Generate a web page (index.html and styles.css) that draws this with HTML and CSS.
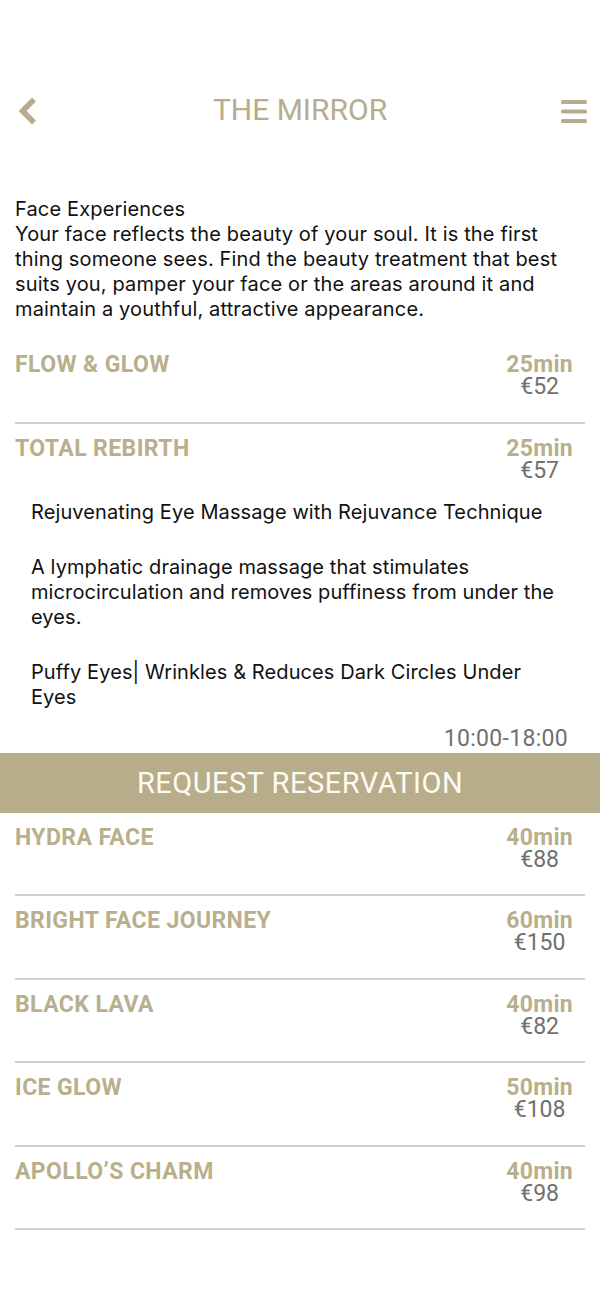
FILE: index.html
```html
<!DOCTYPE html>
<html lang="en">
<head>
<meta charset="utf-8">
<title>The Mirror</title>
<link rel="stylesheet" href="styles.css">
</head>
<body>
<header class="nav">
  <div class="nav-left">
    <svg class="back" width="22" height="28" viewBox="0 0 22 28"><path d="M17 2.5 L5.5 14 L17 25.5" fill="none" stroke="#b5ad8b" stroke-width="5.5" stroke-linecap="butt" stroke-linejoin="miter"/></svg>
  </div>
  <h1 class="title">THE MIRROR</h1>
  <div class="nav-right">
    <svg class="menu" width="26" height="23" viewBox="0 0 26 23"><rect x="0" y="0" width="26" height="4" rx="1.5" fill="#b5ad8b"/><rect x="0" y="9.5" width="26" height="4" rx="1.5" fill="#b5ad8b"/><rect x="0" y="19" width="26" height="4" rx="1.5" fill="#b5ad8b"/></svg>
  </div>
</header>

<main class="content">
  <p class="intro">Face Experiences<br>Your face reflects the beauty of your soul. It is the first thing someone sees. Find the beauty treatment that best suits you, pamper your face or the areas around it and maintain a youthful, attractive appearance.</p>

  <ul class="list">
    <li class="item">
      <div class="row">
        <span class="name">FLOW &amp; GLOW</span>
        <span class="meta"><span class="dur">25min</span><span class="price">€52</span></span>
      </div>
    </li>
    <li class="item open">
      <div class="row">
        <span class="name">TOTAL REBIRTH</span>
        <span class="meta"><span class="dur">25min</span><span class="price">€57</span></span>
      </div>
      <div class="details">
        <div class="desc">
          <p>Rejuvenating Eye Massage with Rejuvance Technique</p>
          <p>A lymphatic drainage massage that stimulates microcirculation and removes puffiness from under the eyes.</p>
          <p>Puffy Eyes| Wrinkles &amp; Reduces Dark Circles Under Eyes</p>
        </div>
        <div class="hours">10:00-18:00</div>
        <button class="reserve">REQUEST RESERVATION</button>
      </div>
    </li>
    <li class="item">
      <div class="row">
        <span class="name">HYDRA FACE</span>
        <span class="meta"><span class="dur">40min</span><span class="price">€88</span></span>
      </div>
    </li>
    <li class="item">
      <div class="row">
        <span class="name">BRIGHT FACE JOURNEY</span>
        <span class="meta"><span class="dur">60min</span><span class="price">€150</span></span>
      </div>
    </li>
    <li class="item">
      <div class="row">
        <span class="name">BLACK LAVA</span>
        <span class="meta"><span class="dur">40min</span><span class="price">€82</span></span>
      </div>
    </li>
    <li class="item">
      <div class="row">
        <span class="name">ICE GLOW</span>
        <span class="meta"><span class="dur">50min</span><span class="price">€108</span></span>
      </div>
    </li>
    <li class="item">
      <div class="row">
        <span class="name">APOLLO’S CHARM</span>
        <span class="meta"><span class="dur">40min</span><span class="price">€98</span></span>
      </div>
    </li>
  </ul>
</main>
</body>
</html>
```

FILE: styles.css
```css
* { box-sizing: border-box; }

html, body {
  margin: 0;
  padding: 0;
  background: #ffffff;
}

body {
  width: 600px;
  font-family: Roboto, "Liberation Sans", sans-serif;
  color: #111111;
}

.nav {
  display: grid;
  grid-template-columns: 80px 1fr 80px;
  align-items: center;
  height: 44px;
  margin-top: 88px;
}

.nav-left {
  padding-left: 17px;
  display: flex;
  align-items: center;
}

.nav-right {
  padding-right: 13px;
  display: flex;
  justify-content: flex-end;
  align-items: center;
}

.back { display: block; margin-top: 2px; }
.menu { display: block; margin-top: 2px; }

.title {
  margin: 0;
  text-align: center;
  font-family: Roboto, sans-serif;
  font-weight: 400;
  font-size: 30px;
  line-height: 44px;
  color: #b5ad8b;
}

.content {
  padding: 0 15px;
}

.intro {
  margin: 65px 0 0;
  font-family: Inter, "Noto Sans", sans-serif;
  font-size: 20px;
  line-height: 25px;
  letter-spacing: 0.15px;
  color: #111111;
}

.list {
  list-style: none;
  margin: 32px 0 0;
  padding: 0;
}

.item {
  border-bottom: 2px solid #cfcfcf;
}

.row {
  display: flex;
  justify-content: space-between;
  align-items: flex-start;
  padding: 14px 0 23.5px;
}

.item:first-child .row { padding-top: 0; }

.name {
  font-family: Roboto, sans-serif;
  font-weight: 700;
  font-size: 23px;
  line-height: 22px;
  letter-spacing: 0.4px;
  color: #b8af8d;
}

.meta {
  display: flex;
  flex-direction: column;
  align-items: center;
  padding-right: 12px;
}

.dur {
  font-family: Roboto, sans-serif;
  font-weight: 700;
  font-size: 23px;
  line-height: 22px;
  letter-spacing: 0.3px;
  color: #b8af8d;
}

.price {
  font-family: Roboto, sans-serif;
  font-weight: 400;
  font-size: 23px;
  line-height: 22px;
  color: #707070;
}

.open { border-bottom: 0; }
.open .row { padding-bottom: 0; }

.details {
  display: flex;
  flex-direction: column;
  margin: 0 -15px;
}

.desc {
  margin-top: 18px;
  padding: 0 38px 0 31px;
  font-family: Inter, "Noto Sans", sans-serif;
  font-size: 20px;
  line-height: 25px;
  letter-spacing: 0.1px;
  color: #111111;
}

.desc p { margin: 0; }
.desc p + p { margin-top: 30px; }

.hours {
  align-self: flex-end;
  margin-top: 15px;
  padding-right: 32px;
  font-family: Roboto, sans-serif;
  font-size: 23px;
  line-height: 28px;
  letter-spacing: 0.3px;
  color: #707070;
}

.reserve {
  display: block;
  width: 100%;
  height: 60px;
  margin: 0;
  border: 0;
  padding: 0;
  background: #b8ad8a;
  color: #fdfbf2;
  font-family: Roboto, sans-serif;
  font-weight: 400;
  font-size: 29px;
  line-height: 60px;
  letter-spacing: 0.5px;
  text-align: center;
}
```
